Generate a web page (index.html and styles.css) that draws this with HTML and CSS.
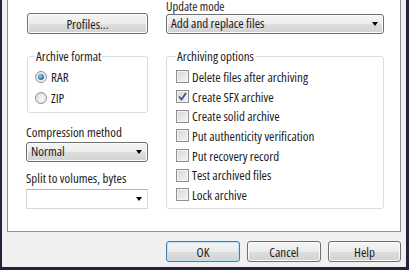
FILE: index.html
```html
<!DOCTYPE html>
<html lang="en">
<head>
  <meta charset="UTF-8" />
  <title>Archive name and parameters</title>
  <link rel="stylesheet" href="styles.css">
</head>
<body>
  <div class="window">
    <div class="panel">
      <div class="col">
        <button class="btn profiles">Profiles...</button>
        <fieldset class="group format">
          <legend>Archive format</legend>
          <div class="opt"><span class="radio on"></span>RAR</div>
          <div class="opt"><span class="radio"></span>ZIP</div>
        </fieldset>
        <div class="label comp-label">Compression method</div>
        <div class="select comp">Normal<span class="arrow"></span></div>
        <div class="label split-label">Split to volumes, bytes</div>
        <div class="combo"><span class="arrow"></span></div>
      </div>
      <div class="col">
        <div class="label top-label">Update mode</div>
        <div class="select">Add and replace files<span class="arrow"></span></div>
        <fieldset class="group options">
          <legend>Archiving options</legend>
          <div class="chk"><span class="box"></span>Delete files after archiving</div>
          <div class="chk"><span class="box checked">
            <svg width="9" height="9" viewBox="0 0 9 9"><path d="M1 4.5 L3.5 7.5 L8 1" fill="none" stroke="#3f5591" stroke-width="1.8"/></svg>
          </span>Create SFX archive</div>
          <div class="chk"><span class="box"></span>Create solid archive</div>
          <div class="chk"><span class="box"></span>Put authenticity verification</div>
          <div class="chk"><span class="box"></span>Put recovery record</div>
          <div class="chk"><span class="box"></span>Test archived files</div>
          <div class="chk"><span class="box"></span>Lock archive</div>
        </fieldset>
      </div>
    </div>
    <div class="footer">
      <button class="btn ok">OK</button>
      <button class="btn cancel">Cancel</button>
      <button class="btn help">Help</button>
    </div>
  </div>
</body>
</html>
```

FILE: styles.css
```css
* {
  box-sizing: border-box;
  font-family: 'Open Sans', 'Liberation Sans', Arial, sans-serif;
  font-stretch: 80%;
}
body {
  margin: 0;
  background: #f0f0f0;
  font-size: 13px;
  color: #1c1c1c;
}
.window {
  width: 409px;
  height: 270px;
  border-left: 2px solid #22223a;
  border-right: 3px solid #22223a;
  border-bottom: 3px solid #22223a;
  background: #f0f0f0;
}
.panel {
  margin: 0 5px;
  height: 232px;
  background: #fff;
  border: 1px solid #8d8f94;
  border-top: none;
  padding-left: 18px;
  display: grid;
  grid-template-columns: 122px 218px;
  column-gap: 18px;
  align-items: start;
}
.col {
  display: flex;
  flex-direction: column;
}
.label {
  height: 14px;
  line-height: 14px;
  white-space: nowrap;
}
.top-label {
  font-size: 12.5px;
  line-height: 13px;
  height: 14px;
}
.btn {
  height: 21px;
  padding: 0;
  font-size: 13px;
  line-height: 18px;
  color: #1c1c1c;
  border: 1px solid #707070;
  border-radius: 3px;
  background: linear-gradient(#f4f4f4 0%, #ececec 50%, #dedede 51%, #d2d2d2 100%);
  box-shadow: inset 0 0 0 1px #fbfbfb;
}
.profiles {
  margin: 13px 0 0 1px;
  width: 121px;
}
.select {
  position: relative;
  height: 20px;
  line-height: 17px;
  padding-left: 4px;
  border: 1px solid #707070;
  border-radius: 3px;
  background: linear-gradient(#f4f4f4 0%, #ececec 50%, #dedede 51%, #d2d2d2 100%);
  box-shadow: inset 0 0 0 1px #fbfbfb;
}
.arrow {
  position: absolute;
  right: 5px;
  top: 7px;
  width: 0;
  height: 0;
  border-left: 3.5px solid transparent;
  border-right: 3.5px solid transparent;
  border-top: 4px solid #000;
}
.combo {
  position: relative;
  height: 20px;
  margin-top: 4px;
  border: 1px solid #d6d8dc;
  border-top-color: #b3b5ba;
  background: #fff;
}
.comp-label {
  margin-top: 12px;
}
.comp {
  margin-top: 3px;
}
.split-label {
  margin-top: 9px;
}
.group {
  margin: 15px 0 0 1px;
  border: 1px solid #d5dfe5;
  border-radius: 3px;
  min-width: 0;
}
.group legend {
  padding: 0 1px;
  line-height: 14px;
  height: 14px;
}
.format {
  padding: 3px 0 4px 7px;
}
.options {
  margin-left: 0;
  padding: 4px 0 3px 9px;
}
.opt {
  display: flex;
  align-items: center;
  gap: 4px;
  height: 21px;
}
.radio {
  width: 12px;
  height: 12px;
  border-radius: 50%;
  border: 1px solid #929292;
  background: radial-gradient(circle at 60% 65%, #f6f6f6 0%, #dcdcdc 100%);
  display: flex;
  align-items: center;
  justify-content: center;
}
.radio.on::after {
  content: "";
  width: 6px;
  height: 6px;
  border-radius: 50%;
  background: radial-gradient(circle at 40% 35%, #9fd3f0 0%, #2f7db0 55%, #134a78 100%);
}
.chk {
  display: flex;
  align-items: center;
  gap: 3px;
  height: 19.7px;
  white-space: nowrap;
}
.box {
  width: 13px;
  height: 13px;
  border: 1px solid #8f8f8f;
  background: linear-gradient(135deg, #d6d6d6 0%, #f4f4f4 100%);
  box-shadow: inset 0 0 0 1px #f4f4f4;
  display: flex;
  align-items: center;
  justify-content: center;
}
.footer {
  display: flex;
  justify-content: flex-end;
  gap: 7px;
  padding: 9px 5px 0 0;
}
.ok {
  width: 74px;
  border-color: #3c7fb1;
  box-shadow: inset 0 0 0 1px #bfe3f6;
}
.cancel {
  width: 74px;
}
.help {
  width: 73px;
}
```
